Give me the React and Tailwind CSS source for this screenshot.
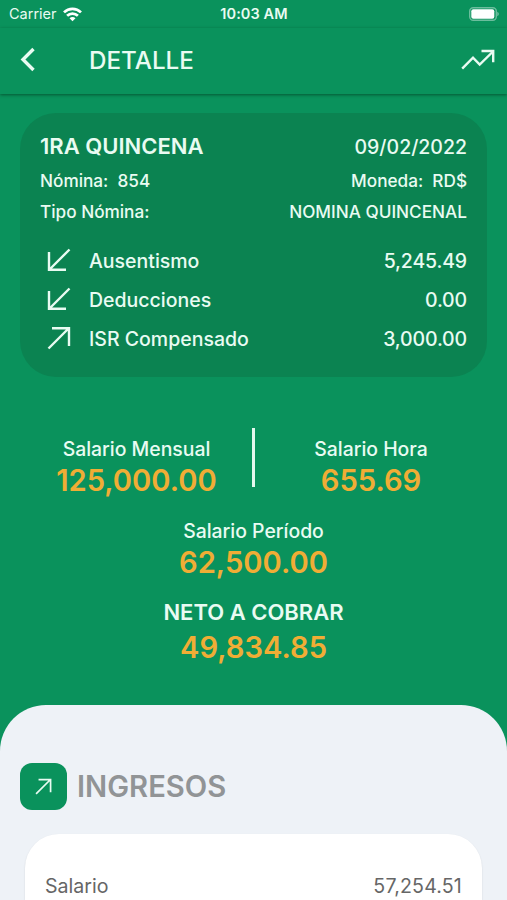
import clsx from 'clsx'

const movements = [
  { label: 'Ausentismo', amount: '5,245.49', direction: 'in' },
  { label: 'Deducciones', amount: '0.00', direction: 'in' },
  { label: 'ISR Compensado', amount: '3,000.00', direction: 'out' },
]

export default function App() {
  return (
    <div className="flex h-[900px] w-[507px] flex-col overflow-hidden bg-[#0a925c] font-['Inter',sans-serif] text-[#e9fbf2]">
      <StatusBar />
      <Header />
      <main className="flex min-h-0 flex-1 flex-col">
        <PayrollCard />
        <Totals />
        <Income />
      </main>
    </div>
  )
}

function StatusBar() {
  return (
    <div className="grid h-7 shrink-0 grid-cols-3 items-center pr-2 pb-px pl-[9px]">
      <div className="flex items-center gap-[6px]">
        <span className="text-[14.5px] leading-7">Carrier</span>
        <WifiIcon />
      </div>
      <span className="text-center text-[14.5px] leading-7 font-semibold tracking-[0.1px]">10:03 AM</span>
      <div className="flex items-center justify-end">
        <BatteryIcon />
      </div>
    </div>
  )
}

function Header() {
  return (
    <header className="flex h-[66px] shrink-0 items-center pr-3 pb-[2px] pl-5 shadow-[0_1px_3px_rgba(0,50,25,0.6)]">
      <button aria-label="Volver" className="w-[69px]">
        <svg width="16" height="26" viewBox="0 0 16 26" fill="none" stroke="currentColor" strokeWidth="3.4">
          <path d="M13.5 2 3 12.5l10.5 10.5" />
        </svg>
      </button>
      <h1 className="flex-1 pt-[2px] text-[24.2px] leading-none font-medium">DETALLE</h1>
      <button aria-label="Tendencia">
        <svg width="34" height="22" viewBox="0 0 34 22" fill="none" stroke="currentColor" strokeWidth="2.4">
          <path d="M1.2 19.6 12 8.6l6.7 7L32 2.5" />
          <path d="M20.5 2h11.7v11.3" />
        </svg>
      </button>
    </header>
  )
}

function PayrollCard() {
  return (
    <section className="mt-[19px] mr-5 ml-5 h-[264px] shrink-0 rounded-[36px] bg-[#0b8351] pt-[17px] pr-5 pl-5 font-medium">
      <Row className="h-8">
        <span className="text-[22px] font-semibold">1RA QUINCENA</span>
        <span className="pt-[4px] text-[19.5px]">09/02/2022</span>
      </Row>
      <Row className="h-[38px] text-[17.2px]">
        <span className="whitespace-pre">Nómina:  854</span>
        <span className="whitespace-pre">Moneda:  RD$</span>
      </Row>
      <Row className="h-[23px] text-[17.2px]">
        <span>Tipo Nómina:</span>
        <span>NOMINA QUINCENAL</span>
      </Row>
      <div className="mt-[19px]">
        {movements.map(({ label, amount, direction }) => (
          <Row key={label} className="h-[39px] text-[19.5px]">
            <span className="flex items-center">
              <span className="w-[49px] pb-[3px] pl-[7px]">
                <ArrowIcon className={clsx('h-6 w-6', direction === 'in' && 'rotate-180')} />
              </span>
              {label}
            </span>
            <span className="tracking-[-0.15px]">{amount}</span>
          </Row>
        ))}
      </div>
    </section>
  )
}

function Row({ className, children }) {
  return <div className={clsx('flex items-center justify-between leading-none', className)}>{children}</div>
}

function Totals() {
  return (
    <section className="mt-[51px] h-[277px] shrink-0">
      <div className="flex">
        <Total className="w-[252px] pt-[9px] pl-[21px]" label="Salario Mensual" amount="125,000.00" />
        <span className="h-[59px] w-[3px] bg-[#e4f8ee]" />
        <Total className="w-[252px] pt-[9px] pr-[20px]" label="Salario Hora" amount="655.69" />
      </div>
      <Total className="mt-5" label="Salario Período" amount="62,500.00" />
      <div className="mt-[13px] flex flex-col items-center">
        <span className="text-[22px] leading-9 font-semibold">NETO A COBRAR</span>
        <span className="text-[29.2px] leading-9 font-semibold text-[#f0ad35]">49,834.85</span>
      </div>
    </section>
  )
}

function Total({ className, label, amount }) {
  return (
    <div className={clsx('flex flex-col items-center', className)}>
      <span className="text-[19.4px] leading-6 font-medium">{label}</span>
      <span className="mt-[2px] text-[29.2px] leading-9 font-semibold text-[#f0ad35]">{amount}</span>
    </div>
  )
}

function Income() {
  return (
    <section className="flex flex-1 flex-col rounded-t-[46px] bg-[#eef2f7] pt-[58px]">
      <div className="flex h-[47px] shrink-0 items-center gap-[10px] pl-5">
        <span className="grid h-[47px] w-[47px] place-items-center rounded-[12px] bg-[#0a925c]">
          <ArrowIcon className="h-[17px] w-[17px]" />
        </span>
        <h2 className="pt-px text-[29.2px] leading-none font-semibold text-[#919496]">INGRESOS</h2>
      </div>
      <div className="mx-[25px] mt-[24px] flex-1 rounded-t-[34px] bg-white px-5 pt-[41px] text-[#666] shadow-[0_1px_2px_rgba(0,0,0,0.12)]">
        <Row className="h-6 text-[19.6px]">
          <span>Salario</span>
          <span className="tracking-[0.15px]">57,254.51</span>
        </Row>
      </div>
    </section>
  )
}

function ArrowIcon({ className }) {
  return (
    <svg className={className} viewBox="0 0 24 24" fill="none" stroke="currentColor" strokeWidth="2.4">
      <path d="M1.5 22.5 21.5 2.5M5 2.2h17V20" />
    </svg>
  )
}

function WifiIcon() {
  return (
    <svg width="19" height="15" viewBox="0 0 19 15" fill="none" stroke="#fff" strokeWidth="2.7">
      <path d="M1 5.4c4.8-4.7 12.2-4.7 17 0M4.1 8.8c3-3 7.8-3 10.8 0" />
      <path d="M6.5 11.2c1.7-1.5 4.3-1.5 6 0l-3 3z" fill="#fff" stroke="none" />
    </svg>
  )
}

function BatteryIcon() {
  return (
    <svg width="30" height="14" viewBox="0 0 30 14">
      <rect x="0.7" y="0.7" width="26.6" height="12.6" rx="3.5" fill="none" stroke="#fff" strokeOpacity="0.4" strokeWidth="1.4" />
      <rect x="2.3" y="2.3" width="23" height="9.4" rx="2" fill="#fff" />
      <path d="M28.4 4.8c1.7.8 1.7 3.6 0 4.4z" fill="#fff" fillOpacity="0.5" />
    </svg>
  )
}
